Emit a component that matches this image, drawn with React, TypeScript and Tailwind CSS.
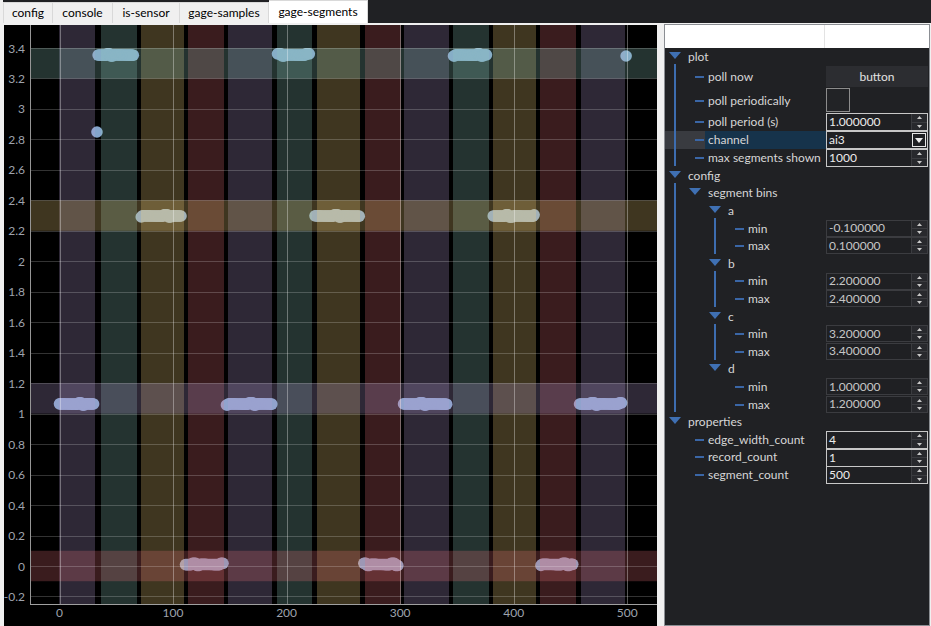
import React from "react";

type BandKey = "p" | "t" | "o" | "m";
const BAND: Record<BandKey, string> = {
  p: "#b8a0d8",
  t: "#90ccc0",
  o: "#fcd880",
  m: "#e87078",
};

const X = (u: number) => 59.5 + u * 1.1355;
const Y = (v: number) => 566 - v * 152.35;

const vBands: [number, number, BandKey][] = [
  [59, 95, "p"],
  [101, 137, "t"],
  [141, 184, "o"],
  [188, 224, "m"],
  [228, 272, "p"],
  [277, 312, "t"],
  [317, 360, "o"],
  [365, 401, "m"],
  [404, 449, "p"],
  [453, 489, "t"],
  [493, 536, "o"],
  [540, 576, "m"],
  [581, 625, "p"],
];

const hBands: [number, number, BandKey][] = [
  [-0.1, 0.1, "m"],
  [2.2, 2.4, "o"],
  [1.0, 1.2, "p"],
  [3.2, 3.4, "t"],
];

const segs: [number, number, number][] = [
  [0, 30, 404],
  [33, 33, 132],
  [34, 65, 55],
  [72, 107, 216],
  [111, 144, 564.5],
  [147, 187, 404],
  [192, 220, 55],
  [225, 264, 216],
  [268, 298, 564.5],
  [303, 341, 404],
  [347, 376, 55],
  [382, 418, 216],
  [424, 452, 564.5],
  [458, 495, 404],
  [499, 499, 55],
];

const rnd = (i: number) => ((i * 9301 + 49297) % 233280) / 233280;

function Plot() {
  const dots: { x: number; y: number }[] = [];
  segs.forEach(([a, b, y]) => {
    for (let i = a; i <= b; i++) {
      const r = rnd(i);
      const j = r > 0.85 ? -1.2 : r < 0.12 ? 1 : (r - 0.5) * 0.6;
      dots.push({ x: X(i), y: y + j });
    }
  });
  const yTicks: number[] = [];
  for (let k = -1; k <= 17; k++) yTicks.push(k * 0.2);
  const xTicks = [0, 100, 200, 300, 400, 500];
  const fmt = (v: number) => {
    const r = Math.round(v * 10) / 10;
    return Number.isInteger(r) ? String(r) : r.toFixed(1);
  };
  return (
    <svg width="653" height="601" viewBox="4 25 653 601" className="block">
      <rect x="4" y="25" width="653" height="601" fill="#000" />
      <svg x="30" y="25" width="627" height="579" viewBox="30 25 627 579" overflow="hidden">
        {dots.map((d, i) => (
          <circle key={i} cx={d.x} cy={d.y} r="5.8" fill="#84a4ca" />
        ))}
        {vBands.map(([a, b, k], i) => (
          <rect key={"v" + i} x={a} y={25} width={b - a} height={579} fill={BAND[k]} fillOpacity={0.25} />
        ))}
        {hBands.map(([lo, hi, k], i) => (
          <rect key={"h" + i} x={30} y={Y(hi)} width={627} height={Y(lo) - Y(hi)} fill={BAND[k]} fillOpacity={0.25} />
        ))}
        {yTicks.map((v, i) => (
          <line key={"gy" + i} x1={30} x2={657} y1={Math.round(Y(v)) + 0.5} y2={Math.round(Y(v)) + 0.5} stroke="#fff" strokeOpacity={0.2} />
        ))}
        {xTicks.map((u, i) => (
          <line key={"gx" + i} x1={Math.round(X(u)) + 0.5} x2={Math.round(X(u)) + 0.5} y1={25} y2={604} stroke="#fff" strokeOpacity={0.34} />
        ))}
      </svg>
      <line x1={30.5} x2={30.5} y1={25} y2={604} stroke="#969696" />
      <line x1={30} x2={657} y1={604.5} y2={604.5} stroke="#a0a0a0" />
      {yTicks.map((v, i) => (
        <text key={"ly" + i} x={25} y={Y(v) + 4.5} textAnchor="end" fontSize="12" fill="#9ea3ad" fontFamily="Lato, 'Noto Sans', sans-serif">
          {fmt(v)}
        </text>
      ))}
      {xTicks.map((u, i) => (
        <text key={"lx" + i} x={X(u)} y={617} textAnchor="middle" fontSize="12" fill="#9ea3ad" fontFamily="Lato, 'Noto Sans', sans-serif">
          {u}
        </text>
      ))}
    </svg>
  );
}

function Tri() {
  return (
    <svg width="12" height="7" className="-mt-[3px] shrink-0">
      <polygon points="0,0 12,0 6,7" fill="#3f70b3" />
    </svg>
  );
}

function Dash() {
  return <div className="h-[2px] w-[9px] shrink-0 bg-[#3a66a6]" />;
}

function SpinArrows() {
  return (
    <div className="flex w-[16px] flex-col border-l border-[#3b3c40]">
      <div className="flex flex-1 items-center justify-center border-b border-[#3b3c40] bg-[#28292d]">
        <svg width="5" height="3">
          <polygon points="0,3 5,3 2.5,0" fill="#c8c8c8" />
        </svg>
      </div>
      <div className="flex flex-1 items-center justify-center bg-[#28292d]">
        <svg width="5" height="3">
          <polygon points="0,0 5,0 2.5,3" fill="#c8c8c8" />
        </svg>
      </div>
    </div>
  );
}

function Spin({ value, light }: { value: string; light: boolean }) {
  return (
    <div
      className={
        light
          ? "flex h-[18px] w-[102px] border border-[#c8c8c8] bg-[#1f2023]"
          : "flex h-[17px] w-[102px] border border-[#3b3c40] bg-[#1f2023]"
      }
    >
      <div className={light ? "flex flex-1 items-center pl-[2px] text-[12px] text-[#ececec]" : "flex flex-1 items-center pl-[2px] text-[12px] text-[#c6c6c6]"}>
        {value}
      </div>
      <SpinArrows />
    </div>
  );
}

function Row({
  group,
  label,
  h,
  pl,
  widget,
}: {
  group: boolean;
  label: string;
  h: string;
  pl: string;
  widget?: React.ReactNode;
}) {
  return (
    <div className={`flex ${h}`}>
      <div className={`flex w-[161px] items-center ${pl}`}>
        {group ? <Tri /> : <Dash />}
        <span className={group ? "ml-[7px] whitespace-nowrap" : "ml-[4px] whitespace-nowrap"}>{label}</span>
      </div>
      <div className="flex w-[102px] items-start">{widget}</div>
    </div>
  );
}

function Tree() {
  return (
    <div className="ml-[7px] flex h-[602px] w-[266px] flex-col border border-[#8b8e93] bg-[#202124] text-[12px] text-[#d6d6d6]">
      <div className="flex h-[23px] shrink-0 bg-white">
        <div className="w-[160px] border-r border-[#e3e3e3]" />
      </div>
      <div className="relative">
        <Row group label="plot" h="h-[18px]" pl="pl-[4px]" />
        <Row
          group={false}
          label="poll now"
          h="h-[22px]"
          pl="pl-[30px]"
          widget={
            <div className="flex h-[21px] w-[102px] items-center justify-center bg-[#2c2d31] text-[#e2e2e2]">button</div>
          }
        />
        <Row
          group={false}
          label="poll periodically"
          h="h-[25px]"
          pl="pl-[30px]"
          widget={<div className="h-[24px] w-[24px] border border-[#8c8c8c] bg-[#222326]" />}
        />
        <Row group={false} label="poll period (s)" h="h-[18px]" pl="pl-[30px]" widget={<Spin value="1.000000" light />} />
        <div className="flex h-[18px]">
          <div className="flex h-full w-[40px] items-center bg-[#393b40] pl-[30px]">
            <Dash />
          </div>
          <div className="flex h-full w-[121px] items-center bg-[#16334b] pl-[3px] whitespace-nowrap">channel</div>
          <div className="flex h-[18px] w-[102px] items-center border border-[#c8c8c8] bg-[#1f2023]">
            <span className="flex-1 pl-[2px] text-[#ececec]">ai3</span>
            <div className="mr-[1px] flex h-[14px] w-[14px] items-center justify-center border border-[#e6e6e6]">
              <svg width="8" height="5">
                <polygon points="0,0 8,0 4,5" fill="#ececec" />
              </svg>
            </div>
          </div>
        </div>
        <Row group={false} label="max segments shown" h="h-[18px]" pl="pl-[30px]" widget={<Spin value="1000" light />} />
        <div className="absolute bottom-[1px] left-[9px] top-[16px] w-[2px] bg-[#3d6db0]" />
      </div>
      <div className="relative">
        <Row group label="config" h="h-[17.6px]" pl="pl-[4px]" />
        <Row group label="segment bins" h="h-[17.6px]" pl="pl-[24px]" />
        {[
          ["a", "-0.100000", "0.100000"],
          ["b", "2.200000", "2.400000"],
          ["c", "3.200000", "3.400000"],
          ["d", "1.000000", "1.200000"],
        ].map(([n, mn, mx], idx) => (
          <div className="relative" key={n}>
            <Row group label={n} h="h-[17.6px]" pl="pl-[44px]" />
            <Row group={false} label="min" h="h-[17.6px]" pl="pl-[70px]" widget={<Spin value={mn} light={false} />} />
            <Row group={false} label="max" h="h-[17.6px]" pl="pl-[70px]" widget={<Spin value={mx} light={false} />} />
            {idx < 3 && <div className="absolute bottom-[1px] left-[49px] top-[16px] w-[2px] bg-[#3d6db0]" />}
          </div>
        ))}
        <div className="absolute bottom-[1px] left-[9px] top-[16px] w-[2px] bg-[#3d6db0]" />
      </div>
      <div>
        <Row group label="properties" h="h-[17.6px]" pl="pl-[4px]" />
        <Row group={false} label="edge_width_count" h="h-[17.6px]" pl="pl-[30px]" widget={<Spin value="4" light />} />
        <Row group={false} label="record_count" h="h-[17.6px]" pl="pl-[30px]" widget={<Spin value="1" light />} />
        <Row group={false} label="segment_count" h="h-[17.6px]" pl="pl-[30px]" widget={<Spin value="500" light />} />
      </div>
    </div>
  );
}

function Tabs() {
  const base = "flex h-[21px] items-center justify-center border-t border-r border-[#d9d9d9] bg-[#f0f0f0]";
  return (
    <div className="flex h-[23px] items-end bg-[#202124] text-[12px] text-black">
      <div className="h-full w-[3px] bg-[#f0f0f0]" />
      <div className={`${base} w-[50px] border-l`}>config</div>
      <div className={`${base} w-[60px]`}>console</div>
      <div className={`${base} w-[67px]`}>is-sensor</div>
      <div className={`${base} w-[89px]`}>gage-samples</div>
      <div className="flex h-[23px] w-[99px] items-center justify-center border-t border-r border-[#d9d9d9] bg-white">
        gage-segments
      </div>
    </div>
  );
}

export default function App() {
  return (
    <div className="h-[626px] w-[931px] overflow-hidden bg-[#f0f0f0] font-['Lato','Noto_Sans',sans-serif]">
      <Tabs />
      <div className="flex h-[603px] items-start pt-[1px]">
        <div className="ml-[4px] mt-[1px] h-[601px] w-[653px] bg-black">
          <Plot />
        </div>
        <Tree />
      </div>
    </div>
  );
}
